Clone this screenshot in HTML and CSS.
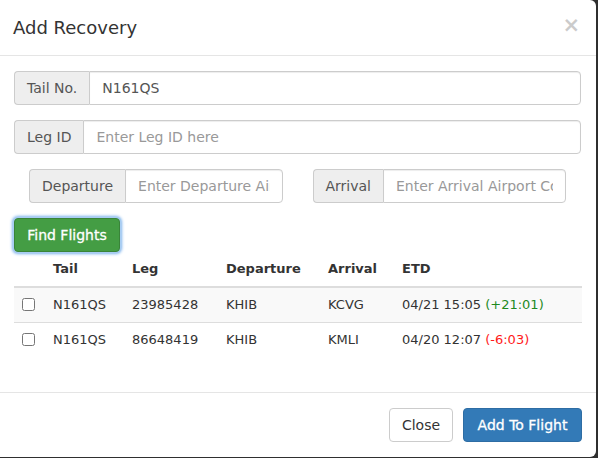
FILE: index.html
```html
<!DOCTYPE html>
<html>
<head>
<meta charset="utf-8">
<link rel="stylesheet" href="styles.css">
</head>
<body>
<div class="modal">
  <div class="modal-header">
    <h4 class="modal-title">Add Recovery</h4>
    <span class="close">×</span>
  </div>
  <div class="modal-body">
    <div class="input-group">
      <span class="addon">Tail No.</span>
      <input class="control" type="text" value="N161QS">
    </div>
    <div class="input-group">
      <span class="addon">Leg ID</span>
      <input class="control" type="text" placeholder="Enter Leg ID here">
    </div>
    <div class="row">
      <div class="col">
        <div class="input-group">
          <span class="addon">Departure</span>
          <input class="control" type="text" placeholder="Enter Departure Airport Code">
        </div>
      </div>
      <div class="col">
        <div class="input-group">
          <span class="addon">Arrival</span>
          <input class="control" type="text" placeholder="Enter Arrival Airport Code">
        </div>
      </div>
    </div>
    <button class="btn btn-success">Find Flights</button>
    <table class="table">
      <colgroup>
        <col class="c-chk"><col class="c-tail"><col class="c-leg"><col class="c-dep"><col class="c-arr"><col>
      </colgroup>
      <thead>
        <tr><th></th><th>Tail</th><th>Leg</th><th>Departure</th><th>Arrival</th><th>ETD</th></tr>
      </thead>
      <tbody>
        <tr class="striped">
          <td><input type="checkbox" class="chk"></td><td>N161QS</td><td>23985428</td><td>KHIB</td><td>KCVG</td><td>04/21 15:05 <span class="pos">(+21:01)</span></td>
        </tr>
        <tr>
          <td><input type="checkbox" class="chk"></td><td>N161QS</td><td>86648419</td><td>KHIB</td><td>KMLI</td><td>04/20 12:07 <span class="neg">(-6:03)</span></td>
        </tr>
      </tbody>
    </table>
  </div>
  <div class="modal-footer">
    <button class="btn btn-default">Close</button>
    <button class="btn btn-primary">Add To Flight</button>
  </div>
</div>
</body>
</html>
```
FILE: styles.css
```css
* { box-sizing: border-box; }
html, body { margin: 0; padding: 0; }
body {
  background: #2f2f2f;
  font-family: "DejaVu Sans", Verdana, sans-serif;
  font-size: 14px;
  line-height: 20px;
  color: #333;
  width: 598px;
  height: 458px;
  overflow: hidden;
}
.modal {
  width: 596px;
  height: 457px;
  background: #fff;
  border-radius: 0 6px 6px 0;
  display: flex;
  flex-direction: column;
}
.modal-header {
  height: 56px;
  border-bottom: 1px solid #e5e5e5;
  padding: 15px 16px 0 13px;
  display: flex;
  justify-content: space-between;
  align-items: flex-start;
}
.modal-title {
  margin: 0;
  font-size: 18px;
  font-weight: normal;
  line-height: 25px;
  color: #333;
}
.close {
  font-size: 21px;
  font-weight: bold;
  line-height: 21px;
  color: #000;
  opacity: 0.2;
  margin-top: 0;
}
.modal-body {
  padding: 15px 15px 0 14px;
  flex: 1;
}
.input-group {
  display: flex;
  height: 34px;
  margin-bottom: 15px;
}
.addon {
  background: #eee;
  border: 1px solid #ccc;
  border-right: 0;
  border-radius: 4px 0 0 4px;
  color: #555;
  padding: 6px 12px;
  line-height: 20px;
  white-space: nowrap;
}
.control {
  flex: 1;
  min-width: 0;
  border: 1px solid #ccc;
  border-radius: 0 4px 4px 0;
  padding: 6px 12px;
  font-family: inherit;
  font-size: 14px;
  color: #555;
  box-shadow: inset 0 1px 1px rgba(0,0,0,.075);
  outline: none;
}
.control::placeholder { color: #999; }
.row {
  display: flex;
}
.col {
  width: 50%;
  padding: 0 15px;
}
.btn {
  font-family: inherit;
  font-size: 14px;
  line-height: 20px;
  padding: 6px 12px;
  border: 1px solid transparent;
  border-radius: 4px;
  height: 34px;
  cursor: pointer;
}
.btn-success {
  background: #449d44;
  border-color: #398439;
  color: #fff;
  width: 106px;
  padding: 6px 0;
  -webkit-text-stroke: 0.3px #fff;
  box-shadow: 0 0 0 1px #a9cdf2, 0 0 3px 2px #7db3ec;
}
.btn-default {
  background: #fff;
  border-color: #ccc;
  color: #333;
  width: 64px;
  padding: 6px 0;
}
.btn-primary {
  background: #337ab7;
  border-color: #2e6da4;
  color: #fff;
  width: 119px;
  padding: 6px 0;
  -webkit-text-stroke: 0.3px #fff;
}
.table {
  width: 568px;
  border-collapse: collapse;
  table-layout: fixed;
  margin-top: 0;
  font-size: 13px;
}
.c-chk { width: 31px; }
.c-tail { width: 79px; }
.c-leg { width: 94px; }
.c-dep { width: 102px; }
.c-arr { width: 74px; }
.table th, .table td {
  text-align: left;
  padding: 7px 8px;
  line-height: 20px;
  white-space: nowrap;
  overflow: hidden;
}
.table th {
  font-weight: bold;
  border-bottom: 2px solid #ddd;
}
.table tbody tr:first-child td { border-bottom: 1px solid #ddd; }
.striped { background: #f9f9f9; }
.chk {
  margin: 0;
  width: 13px;
  height: 13px;
  vertical-align: -2px;
}
.pos { color: #1e8a1e; }
.neg { color: #ff1a1a; }
.modal-footer {
  height: 65px;
  border-top: 1px solid #e5e5e5;
  padding: 15px 14px 0 0;
  display: flex;
  justify-content: flex-end;
  gap: 10px;
}
```
